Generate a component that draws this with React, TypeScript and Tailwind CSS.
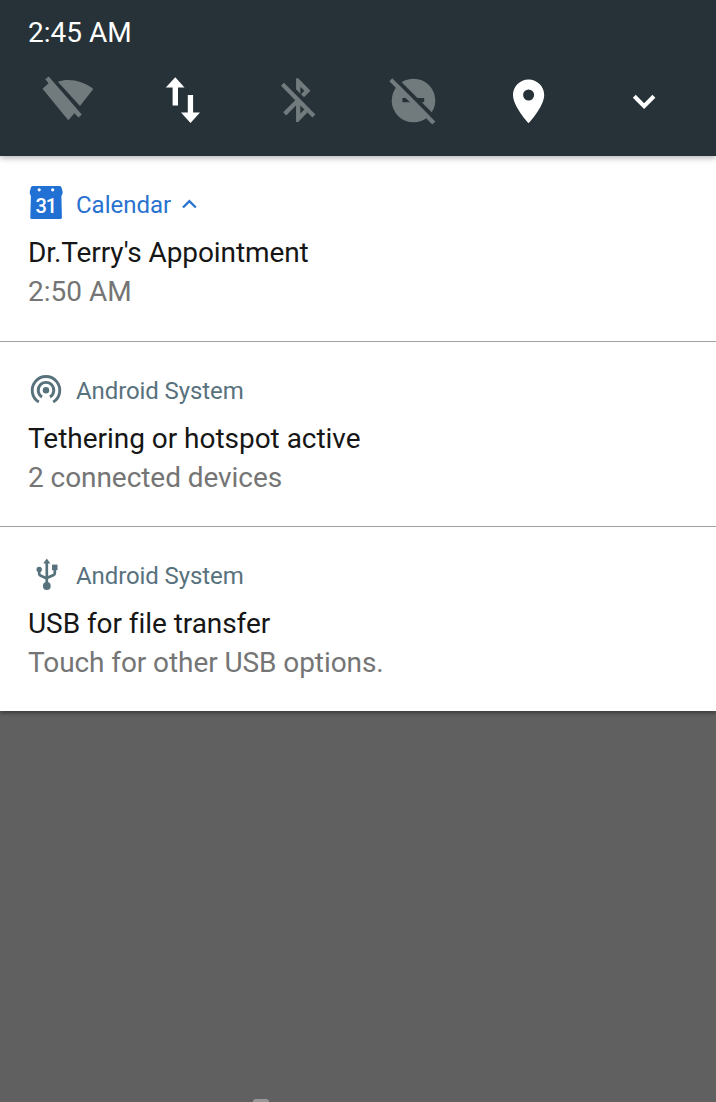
import type { ReactNode } from 'react';

const off = '#717a7d';

function QuickIcon({ box, children }: { box: string; children: ReactNode }) {
  return (
    <svg className="h-[60px] w-[115px] shrink-0" viewBox={box} fill="#fff">
      {children}
    </svg>
  );
}

function QuickSettings() {
  return (
    <div className="mt-[21px] flex pl-[10px]">
      <QuickIcon box="10 70 115 60">
        <path fill={off} d="M57.8 81.8C68 78.2 82 80.2 93.3 89L80 106Z" />
        <path fill={off} d="M45.3 79.3L48.7 76.5L81.8 114.5L78.5 117.5L74.4 113.2L68.3 120.3L42.5 88.8L48.6 83.3Z" />
      </QuickIcon>
      <QuickIcon box="125 70 115 60">
        <path d="M175.3 77.3L184.5 87.6H178V105.5H172.6V87.6H165.8ZM187.8 95H193.1V112.5H200L190.5 123L181 112.5H187.8Z" />
      </QuickIcon>
      <QuickIcon box="240 70 115 60">
        <path
          fill={off}
          transform="translate(272.4 74) scale(2.15 2.18)"
          d="M13 5.83l1.88 1.88-1.6 1.6 1.41 1.41 3.02-3.02L12 2h-1v5.03l2 2v-3.2zM5.41 4L4 5.41 10.59 12 5 17.59 6.41 19 11 14.41V22h1l4.29-4.29 2.3 2.29L20 18.59 5.41 4zM13 18.17v-3.76l1.88 1.88L13 18.17z"
        />
      </QuickIcon>
      <QuickIcon box="355 70 115 60">
        <circle cx="413.5" cy="100.5" r="21.8" fill={off} />
        <path d="M402.4 98H424.2V102.2H402.4Z" fill="#263238" />
        <path d="M394.5 78L437.5 121" stroke="#263238" strokeWidth="4" />
        <path d="M405.8 95L416 105.2" stroke={off} strokeWidth="4" />
        <path d="M390.8 79.8L433.8 123" stroke={off} strokeWidth="4.2" />
      </QuickIcon>
      <QuickIcon box="470 70 115 60">
        <path
          fillRule="evenodd"
          d="M528.6 79.5C520 79.5 513 86.4 513 95C513 106.6 528.6 123.3 528.6 123.3S544.2 106.6 544.2 95C544.2 86.4 537.2 79.5 528.6 79.5ZM528.6 100.5A5.5 5.5 0 1 1 528.6 89.5A5.5 5.5 0 0 1 528.6 100.5Z"
        />
      </QuickIcon>
      <QuickIcon box="585 70 115 60">
        <path d="M634.3 96.3L644.1 106.2L653.9 96.3" fill="none" stroke="#fff" strokeWidth="4.1" />
      </QuickIcon>
    </div>
  );
}

function CalendarIcon() {
  return (
    <svg className="h-[40px] w-[36px]" viewBox="28 184 36 40">
      <path
        fill="#2170d4"
        d="M32.5 186H59.8Q61.2 186 61.5 187.5L62.6 191.5V193.5L61.4 196L61.9 217.5Q61.9 219 60.4 219H31.8Q30.3 219 30.3 217.5L30.9 196L29.8 193.5V191.5L30.9 187.5Q31.2 186 32.5 186Z"
      />
      <circle cx="39.2" cy="189.8" r="1.6" fill="#fff" />
      <circle cx="52.7" cy="189.8" r="1.6" fill="#fff" />
      <text x="45.8" y="212.5" textAnchor="middle" fill="#fff" className="font-[Roboto] text-[20px] font-medium tracking-[-1px]">
        31
      </text>
    </svg>
  );
}

function HotspotIcon() {
  return (
    <svg className="h-[40px] w-[36px]" viewBox="28 370 36 40" fill="none" stroke="#58727d" strokeWidth="2.9">
      <circle cx="46" cy="390.2" r="3.2" fill="#58727d" stroke="none" />
      <path d="M42 396.9A7.8 7.8 0 1 1 50 396.9" />
      <path d="M38.8 402.1A13.8 13.8 0 1 1 53.2 402.1" />
    </svg>
  );
}

function UsbIcon() {
  return (
    <svg className="h-[40px] w-[36px]" viewBox="28 555 36 40" fill="#58727d">
      <path d="M46.8 558.5L50.4 563.5H43.2Z" />
      <circle cx="46.8" cy="586" r="3.9" />
      <circle cx="39.2" cy="569.4" r="2.7" />
      <path d="M52 564.6H57.5V570.2H52Z" />
      <path
        d="M46.8 562V584M39.2 570V573.8Q39.2 575 40.3 575.5L46.8 578.4M54.8 569V573.2Q54.8 574.4 53.7 574.9L46.8 578"
        fill="none"
        stroke="#58727d"
        strokeWidth="2.7"
      />
    </svg>
  );
}

interface NotificationProps {
  icon: ReactNode;
  app: string;
  title: string;
  detail: string;
  titleSpacing: string;
  detailSpacing: string;
  expandable?: boolean;
  frame: string;
}

function Notification({ icon, app, title, detail, titleSpacing, detailSpacing, expandable, frame }: NotificationProps) {
  return (
    <section className={`px-[28px] ${frame}`}>
      <div className="flex h-[40px] items-center">
        {icon}
        <span className={`ml-3 pt-[2px] text-[24px] leading-[40px] ${expandable ? 'text-[#2872d0]' : 'tracking-[-0.1px] text-[#58727d]'}`}>
          {app}
        </span>
        {expandable && (
          <svg className="ml-[10px] h-[10px] w-[16px]" viewBox="181 199 16 10" fill="none" stroke="#2872d0" strokeWidth="2.3">
            <path d="M183 207.5L189.4 201.2L195.8 207.5" />
          </svg>
        )}
      </div>
      <h2 className={`mt-[9px] text-[28px] leading-[40px] text-[#161616] ${titleSpacing}`}>{title}</h2>
      <p className={`text-[28px] leading-[37px] text-[#757575] ${detailSpacing}`}>{detail}</p>
    </section>
  );
}

export default function App() {
  return (
    <main className="flex h-[1102px] w-[716px] flex-col overflow-hidden bg-[#606060] font-[Roboto,sans-serif]">
      <header className="z-10 h-[156px] shrink-0 bg-[#263238] pt-[13px] shadow-[0_2px_6px_rgba(0,0,0,0.3)]">
        <div className="h-9 pl-[28px] text-[28px] leading-[40px] text-white">2:45 AM</div>
        <QuickSettings />
      </header>
      <div className="shrink-0 bg-white shadow-[0_2px_4px_rgba(0,0,0,0.4)]">
        <Notification
          icon={<CalendarIcon />}
          app="Calendar"
          title="Dr.Terry's Appointment"
          detail="2:50 AM"
          titleSpacing="tracking-[-0.1px]"
          detailSpacing="tracking-normal"
          expandable
          frame="h-[186px] border-b border-[#a0a0a0] pt-[28px]"
        />
        <Notification
          icon={<HotspotIcon />}
          app="Android System"
          title="Tethering or hotspot active"
          detail="2 connected devices"
          titleSpacing="tracking-[-0.03px]"
          detailSpacing="tracking-[-0.06px]"
          frame="h-[185px] border-b border-[#a0a0a0] pt-[28px]"
        />
        <Notification
          icon={<UsbIcon />}
          app="Android System"
          title="USB for file transfer"
          detail="Touch for other USB options."
          titleSpacing="tracking-[-0.06px]"
          detailSpacing="tracking-[-0.08px]"
          frame="h-[184px] pt-[28px]"
        />
      </div>
      <div className="mt-auto ml-[253px] h-[3px] w-4 rounded-t-[3px] bg-[#979797]" />
    </main>
  );
}
